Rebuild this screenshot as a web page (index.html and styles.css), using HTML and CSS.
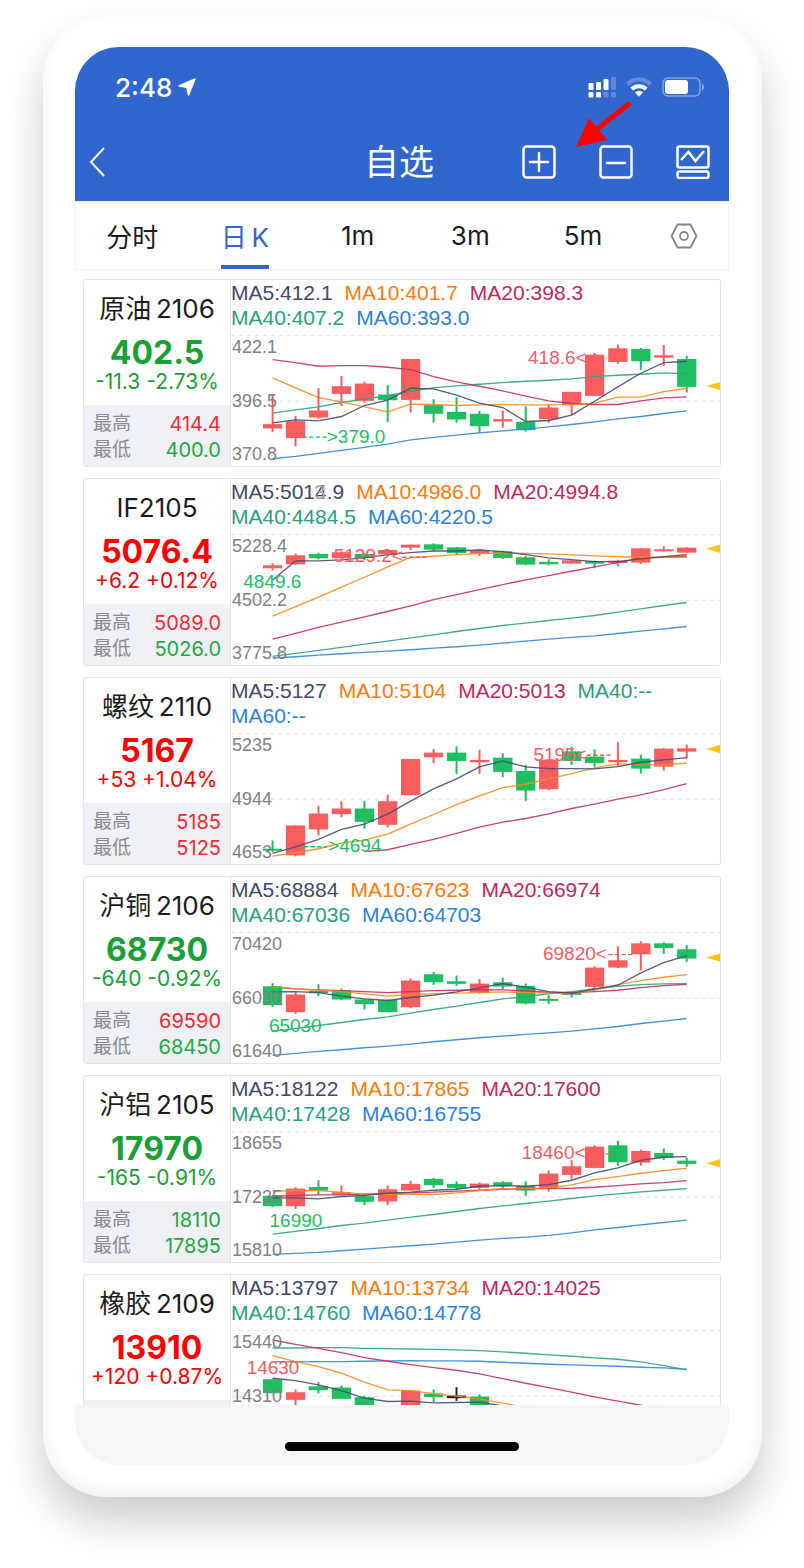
FILE: index.html
```
<!DOCTYPE html>
<html lang="zh-CN">
<head>
<meta charset="utf-8">
<meta name="viewport" content="width=device-width, initial-scale=1">
<title>自选</title>
<link rel="stylesheet" href="styles.css">
</head>
<body>
<main class="phone">
  <div class="screen">
    <header class="top">
      <div class="status">
        <span class="clock">2:48</span>
        <svg class="location" viewBox="0 0 18 18" aria-hidden="true"><path d="M17 1 10.500 17 9 9.300 1 8z"/></svg>
        <span class="indicators">
          <svg width="28" height="21" viewBox="0 0 28 21" fill="#fff" aria-hidden="true">
            <rect x=".5" y="6" width="5" height="7" rx="1"/><rect x="8" y="5" width="5" height="8" rx="1"/><rect x="15.500" y="2" width="5" height="11" rx="1"/><rect x="23" width="5" height="13" rx="1" opacity=".22"/>
            <rect x=".5" y="15" width="5" height="5.500" rx="1"/><rect x="8" y="15" width="5" height="5.500" rx="1"/><rect x="15.500" y="15" width="5" height="5.500" rx="1" opacity=".22"/><rect x="23" y="15" width="5" height="5.500" rx="1" opacity=".22"/>
          </svg>
          <svg width="26" height="20" viewBox="0 0 26 20" fill="none" stroke="#fff" stroke-width="4" aria-hidden="true">
            <path d="M1.500 7.500a16 16 0 0 1 23 0" opacity=".25"/><path d="M5.800 12a10.500 10.500 0 0 1 14.400 0"/><path d="M9 15.500a5.500 5.500 0 0 1 8 0L13 19.700z" fill="#fff" stroke="none"/>
          </svg>
          <svg width="43" height="20" viewBox="0 0 43 20" aria-hidden="true">
            <rect x="1" y="1" width="37" height="18" rx="5" fill="none" stroke="#fff" stroke-width="1.500" opacity=".4"/><rect x="3" y="3" width="23" height="14" rx="3" fill="#fff"/><path d="M40 6.500c2.600 1 2.600 6 0 7z" fill="#fff" opacity=".45"/>
          </svg>
        </span>
      </div>
      <div class="nav">
        <button class="icon-button back" aria-label="返回"><svg width="18" height="32" viewBox="0 0 18 32"><path d="M16 2 3 16l13 14" stroke-width="2"/></svg></button>
        <h1 class="title">自选</h1>
        <div class="actions">
          <button class="icon-button" aria-label="添加"><svg width="34" height="34" viewBox="0 0 34 34"><rect x="1.500" y="1.500" width="31" height="31" rx="3"/><path d="M17 8v18M8 17h18" stroke-linecap="round"/></svg></button>
          <button class="icon-button" aria-label="删除"><svg width="34" height="34" viewBox="0 0 34 34"><rect x="1.500" y="1.500" width="31" height="31" rx="3"/><path d="M8 18h18" stroke-linecap="round"/></svg></button>
          <button class="icon-button" aria-label="图表"><svg width="34" height="34" viewBox="0 0 34 34"><rect x="1.500" y="1.500" width="31" height="21" rx="2"/><rect x="1.500" y="26.500" width="31" height="6.500" rx="2"/><path d="m5 15 7.500-8 7 9 8.500-10"/></svg></button>
        </div>
        <svg class="pointer" width="56" height="46" viewBox="0 0 56 46" aria-hidden="true"><path d="M54 1 20 28" stroke="#f00" stroke-width="5"/><path d="M0 45 13 16 31 38z" fill="#f00"/></svg>
      </div>
    </header>

    <nav class="tabs">
      <button class="tab">分时</button>
      <button class="tab active">日&#8201;K</button>
      <button class="tab">1m</button>
      <button class="tab">3m</button>
      <button class="tab">5m</button>
      <button class="tab" aria-label="设置"><svg width="28" height="26" viewBox="0 0 28 26" fill="none" stroke="#85858a" stroke-width="1.800"><path d="M7.500 1.500h13L26.500 13l-6 11.500h-13L1.500 13z"/><circle cx="14" cy="13" r="4"/></svg></button>
    </nav>

    <section class="list">
      <article class="card">
        <div class="quote">
          <h2 class="name">原油&#8201;2106</h2>
          <div class="price down">402.5</div>
          <div class="change down">-11.3 -2.73%</div>
          <dl class="range"><dt>最高</dt><dd class="high">414.4</dd><dt>最低</dt><dd class="low">400.0</dd></dl>
        </div>
        <div class="panel">
          <div class="legend"><span class="ma5">MA5:412.1</span><span class="ma10">MA10:401.7</span><span class="ma20">MA20:398.3</span><span class="ma40">MA40:407.2</span><span class="ma60">MA60:393.0</span></div>
          <svg class="chart" role="img" aria-label="原油 2106 日K"></svg>
        </div>
      </article>

      <article class="card">
        <div class="quote">
          <h2 class="name">IF2105</h2>
          <div class="price up">5076.4</div>
          <div class="change up">+6.2 +0.12%</div>
          <dl class="range"><dt>最高</dt><dd class="high">5089.0</dd><dt>最低</dt><dd class="low">5026.0</dd></dl>
        </div>
        <div class="panel">
          <div class="legend"><span class="ma5">MA5:501<span class="stacked">4<span class="ghost">3</span></span>.9</span><span class="ma10">MA10:4986.0</span><span class="ma20">MA20:4994.8</span><span class="ma40">MA40:4484.5</span><span class="ma60">MA60:4220.5</span></div>
          <svg class="chart" role="img" aria-label="IF2105 日K"></svg>
        </div>
      </article>

      <article class="card">
        <div class="quote">
          <h2 class="name">螺纹&#8201;2110</h2>
          <div class="price up">5167</div>
          <div class="change up">+53 +1.04%</div>
          <dl class="range"><dt>最高</dt><dd class="high">5185</dd><dt>最低</dt><dd class="high">5125</dd></dl>
        </div>
        <div class="panel">
          <div class="legend"><span class="ma5">MA5:5127</span><span class="ma10">MA10:5104</span><span class="ma20">MA20:5013</span><span class="ma40">MA40:--</span><span class="ma60">MA60:--</span></div>
          <svg class="chart" role="img" aria-label="螺纹 2110 日K"></svg>
        </div>
      </article>

      <article class="card">
        <div class="quote">
          <h2 class="name">沪铜&#8201;2106</h2>
          <div class="price down">68730</div>
          <div class="change down">-640 -0.92%</div>
          <dl class="range"><dt>最高</dt><dd class="high">69590</dd><dt>最低</dt><dd class="low">68450</dd></dl>
        </div>
        <div class="panel">
          <div class="legend"><span class="ma5">MA5:68884</span><span class="ma10">MA10:67623</span><span class="ma20">MA20:66974</span><span class="ma40">MA40:67036</span><span class="ma60">MA60:64703</span></div>
          <svg class="chart" role="img" aria-label="沪铜 2106 日K"></svg>
        </div>
      </article>

      <article class="card">
        <div class="quote">
          <h2 class="name">沪铝&#8201;2105</h2>
          <div class="price down">17970</div>
          <div class="change down">-165 -0.91%</div>
          <dl class="range"><dt>最高</dt><dd class="low">18110</dd><dt>最低</dt><dd class="low">17895</dd></dl>
        </div>
        <div class="panel">
          <div class="legend"><span class="ma5">MA5:18122</span><span class="ma10">MA10:17865</span><span class="ma20">MA20:17600</span><span class="ma40">MA40:17428</span><span class="ma60">MA60:16755</span></div>
          <svg class="chart" role="img" aria-label="沪铝 2105 日K"></svg>
        </div>
      </article>

      <article class="card">
        <div class="quote">
          <h2 class="name">橡胶&#8201;2109</h2>
          <div class="price up">13910</div>
          <div class="change up">+120 +0.87%</div>
          <dl class="range"></dl>
        </div>
        <div class="panel">
          <div class="legend"><span class="ma5">MA5:13797</span><span class="ma10">MA10:13734</span><span class="ma20">MA20:14025</span><span class="ma40">MA40:14760</span><span class="ma60">MA60:14778</span></div>
          <svg class="chart" role="img" aria-label="橡胶 2109 日K"></svg>
        </div>
      </article>
    </section>

    <footer class="home"><span class="home-bar"></span></footer>
  </div>
</main>
<script src="charts.js"></script>
</body>
</html>
```
FILE: styles.css
```
* { box-sizing: border-box; }

body {
  margin: 0;
  height: 100vh;
  padding: 15px 42px 71px 43px;
  background: #fff;
  font-family: Inter, "Noto Sans CJK SC", sans-serif;
  color: #1c1c1e;
}

button {
  margin: 0;
  padding: 0;
  border: 0;
  background: none;
  font: inherit;
  color: inherit;
}

h1, h2, dl, dd { margin: 0; font-weight: 400; }
svg { display: block; }

.phone {
  height: 100%;
  padding: 32px 33px 32px 32px;
  border-radius: 64px;
  background: #fff;
  box-shadow: 0 24px 40px rgba(0, 0, 0, .2), inset 0 -6px 16px rgba(0, 0, 0, .06);
}

.screen {
  display: flex;
  flex-direction: column;
  height: 100%;
  border-radius: 44px;
  overflow: hidden;
  background: #fff;
}

.top { background: #3166cc; color: #fff; }

.status {
  display: flex;
  align-items: center;
  height: 80px;
  padding: 0 24px 0 40px;
}

.clock { font-size: 26px; font-weight: 500; }

.location {
  width: 18px;
  height: 18px;
  margin-left: 6px;
  fill: #fff;
  stroke: #fff;
  stroke-width: 1.5;
  stroke-linejoin: round;
}

.indicators {
  display: flex;
  align-items: center;
  gap: 10px;
  margin-left: auto;
}

.nav {
  position: relative;
  display: grid;
  grid-template-columns: 1fr auto 1fr;
  align-items: center;
  height: 74px;
  padding: 0 19px 4px 13px;
}

.title { font-size: 35px; line-height: 48px; }
.actions { display: flex; justify-content: flex-end; gap: 43px; }
.icon-button svg { fill: none; stroke: #fff; stroke-width: 2.5; }
.back { justify-self: start; }
.pointer { position: absolute; right: 97px; top: -25px; }

.tabs {
  display: grid;
  grid-template-columns: repeat(5, 113fr) 89fr;
  height: 69px;
  border: 1px solid #f4f4f6;
}

.tab {
  display: flex;
  align-items: center;
  justify-content: center;
  justify-self: center;
  border-top: 4px solid transparent;
  border-bottom: 4px solid transparent;
  font-size: 26px;
}

.tab.active { color: #3166cc; border-bottom-color: #3166cc; }

.list {
  display: flex;
  flex-direction: column;
  gap: 11px;
  flex: 1;
  min-height: 0;
  padding: 9px 8px 0;
  overflow: hidden;
}

.card {
  display: grid;
  grid-template-columns: 147px 1fr;
  flex: none;
  min-height: 188px;
  border: 1px solid #e2e4e8;
  border-radius: 3px;
}

.quote {
  display: flex;
  flex-direction: column;
  border-right: 1px solid #e2e4e8;
  text-align: center;
}

.name { padding-top: 10px; font-size: 26px; line-height: 38px; }
.price { font-size: 32px; font-weight: 700; line-height: 38px; margin-top: 6px; }
.change { font-size: 21px; line-height: 20px; }
.up { color: #fe0000; }
.down { color: #17a035; }

.range {
  display: grid;
  grid-template-columns: auto 1fr;
  align-content: start;
  flex: 1;
  margin-top: 13px;
  padding: 6px 9px 3px;
  background: #f0f1f7;
  font-size: 19px;
  line-height: 26px;
  color: #8a8a8f;
}

.range dd { text-align: right; font-size: 20px; }
.high { color: #f52a2f; }
.low { color: #24a63f; }

.panel { min-width: 0; }

.legend {
  display: flex;
  flex-wrap: wrap;
  column-gap: 12px;
  padding: 0 24px 5px 0;
  font-family: "Liberation Sans", Arial, sans-serif;
  font-size: 21px;
  line-height: 25px;
}

.ma5 { color: #40496b; }
.ma10 { color: #ff7a0a; }
.ma20 { color: #c2285a; }
.ma40 { color: #28a07f; }
.ma60 { color: #2a82dc; }

.stacked { position: relative; }
.ghost { position: absolute; left: -1px; top: 0; color: #a6a8ae; line-height: normal; }

.chart {
  width: 100%;
  font-family: "Liberation Sans", Arial, sans-serif;
}

.axis { font-size: 54px; fill: #808085; }
.note { font-size: 57px; }
.grid { stroke: #e2e2e6; stroke-width: 3; stroke-dasharray: 12 12; }
.dash { stroke-width: 4; stroke-dasharray: 13 7; }
.line { fill: none; stroke-width: 4; opacity: .9; }
.last { fill: #f8c610; }

.home {
  display: flex;
  justify-content: center;
  align-items: flex-end;
  height: 60px;
  padding-bottom: 14px;
  background: #f6f6f8;
}

.home-bar { width: 234px; height: 9px; border-radius: 5px; background: #000; }
```
FILE: charts.js
```
// Chart space is 1470 units wide; 19 candle slots, 69.2 units apart.
// Each candle: colour, high, body top, body bottom, low.
const RED = '#f95d5e', GREEN = '#1fbf61', BLACK = '#222';
const LINE = { ma60: '#2f86df', ma40: '#2da283', ma20: '#c4315f', ma10: '#ff8a1c', ma5: '#444e70' };
const COLORS = { r: RED, g: GREEN, k: BLACK };

const charts = [
  { top: 195, last: 346, axis: ['422.1', '396.5', '370.8'],
    candles: 'r 373 461 474 484,r 436 452 503 528,r 353 420 441 445,r 316 347 370 407,r 333 339 391 397,g 343 372 389 455,r 265 265 388 426,g 386 404 430 456,g 380 424 447 457,g 421 430 467 487,r 420 446 453 471,g 408 454 479 483,r 401 411 446 457,r 364 364 403 433,r 247 252 376 376,r 222 233 274 279,g 232 235 272 298,r 223 254 261 286,g 255 265 349 366',
    ma5: [457,448,451,438,405,389,353,355,374,398,411,453,450,434,392,349,308,276,272],
    ma10: [322,352,381,394,409,424,401,402,405,403,402,403,403,403,398,380,380,363,353],
    ma20: [267,276,287,285,285,290,297,318,334,347,361,377,391,399,402,402,391,382,379],
    ma40: [428,418,409,396,386,375,362,352,346,341,336,332,329,325,318,314,311,307,310],
    ma60: [565,558,549,540,531,521,508,501,494,487,481,476,469,462,454,445,438,429,421],
    notes: [[RED, '418.6<', 893, 279, 1068, 1130, 262], [GREEN, '>379.0', 288, 517, 215, 288, 500]] },
  { top: 192, last: 234, axis: ['5228.4', '4502.2', '3775.8'],
    candles: 'r 278 284 293 300,r 249 254 281 283,g 246 250 263 266,r 242 245 263 265,g 247 250 262 268,r 235 238 251 251,r 222 222 231 238,g 218 221 237 241,g 229 230 247 253,r 236 240 249 256,g 240 242 262 265,g 256 260 282 284,g 266 274 281 284,r 267 269 279 280,g 270 272 279 293,r 267 270 277 287,r 233 233 276 280,r 227 236 242 243,r 230 231 246 246',
    ma5: [328,271,271,268,262,252,246,241,241,238,243,252,262,267,273,273,265,258,252],
    ma10: [437,408,380,350,320,289,260,257,252,249,247,248,250,253,256,258,260,260,260],
    ma20: [506,489,471,455,439,423,406,387,372,357,342,328,315,302,289,276,262,260,257],
    ma40: [558,549,540,531,521,512,502,493,483,474,465,458,450,443,435,425,415,405,396],
    ma60: [563,559,554,550,546,542,538,533,529,524,518,512,506,501,496,489,482,475,468],
    notes: [[RED, '5129.2<', 309, 275, 515, 590, 260], [GREEN, '4849.6', 37, 351]] },
  { top: 190, last: 236, axis: ['5235', '4944', '4653'],
    candles: 'g 511 536 542 546,r 466 466 556 559,r 407 430 478 495,r 393 415 432 441,g 392 415 455 476,r 373 393 464 472,r 266 266 375 375,r 236 247 261 279,g 228 247 272 311,r 238 269 276 311,g 249 262 305 321,g 284 302 361 392,r 268 268 357 360,g 230 243 272 284,g 237 259 278 290,r 216 269 276 288,g 253 265 295 310,r 233 235 289 301,r 223 234 244 265',
    ma5: [550,530,508,478,462,432,393,356,326,290,272,290,295,295,296,289,276,269,262],
    ma10: [558,548,536,519,510,492,462,433,403,377,352,342,326,310,293,281,284,283,279],
    ma20: [null,null,null,null,544,539,523,508,490,471,456,445,431,415,402,387,374,358,340],
    notes: [[RED, '5195<', 909, 273, 1069, 1141, 255], [GREEN, '>4694', 292, 546, 219, 289, 530]] },
  { top: 187, last: 262, axis: ['70420', '66030', '61640'],
    candles: 'g 339 348 405 410,r 366 373 426 431,g 342 362 369 378,g 355 360 388 390,g 387 388 402 418,g 388 389 426 426,r 325 331 411 414,g 305 312 336 344,g 316 333 341 347,r 326 340 367 370,g 322 336 349 357,g 340 347 400 402,g 375 386 392 402,g 367 368 374 382,r 288 292 350 353,r 228 270 292 293,r 213 219 252 301,g 216 219 233 251,g 224 237 265 275',
    ma5: [365,364,367,378,386,391,382,375,365,353,340,351,364,369,357,345,308,277,256],
    ma10: [350,356,360,364,371,378,373,371,369,367,365,367,369,371,360,343,331,321,313],
    ma20: [350,356,359,361,364,367,364,361,360,358,359,362,366,367,364,360,352,346,342],
    ma40: [484,475,466,457,448,440,429,418,408,397,386,379,371,364,355,348,343,341,340],
    ma60: [556,550,544,539,533,528,522,515,509,503,498,493,488,483,476,469,460,453,445],
    notes: [[RED, '69820<', 938, 270, 1134, 1207, 253], [GREEN, '65030', 114, 487]] },
  { top: 184, last: 279, axis: ['18655', '17235', '15810'],
    candles: 'g 375 377 408 411,r 351 355 408 416,g 330 350 361 374,r 346 366 373 373,g 372 378 395 405,r 346 357 394 405,r 332 341 361 361,g 323 326 345 353,g 333 341 353 360,r 337 340 353 358,g 332 336 348 354,g 333 347 361 378,r 301 310 353 364,r 270 288 314 327,r 225 229 293 294,g 211 225 276 287,r 238 242 277 286,g 235 248 262 269,g 262 271 281 290',
    ma5: [383,383,386,379,376,369,366,360,357,348,346,348,343,330,308,293,270,261,259],
    ma10: [363,361,361,366,372,373,372,373,368,361,355,355,352,344,328,319,309,301,294],
    ma20: [378,376,374,374,372,370,368,366,363,360,357,356,355,354,351,346,341,337,331],
    ma40: [492,484,475,466,459,450,441,433,424,415,407,400,393,385,377,371,365,360,355],
    ma60: [553,550,547,542,537,532,527,522,516,510,505,501,496,488,479,472,464,457,450],
    notes: [[RED, '18460<', 874, 266, 1067, 1140, 251], [GREEN, '16990', 116, 472]] },
  { top: 181, axis: ['15440', '14310'],
    candles: 'g 326 327 369 370,r 358 366 389 406,g 336 348 360 370,g 346 352 386 386,g 376 381 415 420,g 420 430 450 460,r 361 361 430 430,g 358 370 381 396,k 351 376 384 392,g 373 379 430 430',
    ma5: [324,331,344,361,384,394,393,398,397,396,407,420],
    ma10: [256,274,289,309,336,359,361,370,378,387,399,412],
    ma20: [209,222,234,247,262,273,283,292,300,311,325,339,352,366,380,393,405,418],
    ma40: [233,233,232,232,234,235,236,237,239,241,245,249,254,258,263,267,275,286,299],
    ma60: [274,275,274,274,273,272,271,272,272,273,276,279,282,284,286,288,291,293,297],
    notes: [[RED, '14630', 47, 310]] }
];

const slot = i => Math.round(124.5 + 69.2 * i);
const escape = s => s.replace('<', '&lt;').replace('>', '&gt;');

document.querySelectorAll('.chart').forEach((svg, n) => {
  const c = charts[n];
  svg.setAttribute('viewBox', `0 ${c.top - 2} 1470 390`);
  let out = [0, 197].map(d => `<path class="grid" d="M0 ${c.top + d}H1470"/>`).join('');
  c.candles.split(',').forEach((item, i) => {
    const [k, high, a, b, low] = item.split(' ');
    const x = slot(i);
    out += `<path fill="${COLORS[k]}" d="M${x - 29} ${a}h58V${b}h-58z"/><path fill="${COLORS[k]}" d="M${x - 3} ${high}h6V${low}h-6z"/>`;
  });
  for (const key in LINE) {
    if (!c[key]) continue;
    const pts = c[key].map((y, i) => y === null ? '' : `${slot(i)},${y}`).join(' ').trim();
    out += `<polyline class="line" stroke="${LINE[key]}" points="${pts}"/>`;
  }
  c.notes.forEach(([color, text, x, y, x1, x2, ly]) => {
    out += `<text class="note" fill="${color}" x="${x}" y="${y}">${escape(text)}</text>`;
    if (x1) out += `<path class="dash" stroke="${color}" d="M${x1} ${ly}H${x2}"/>`;
  });
  c.axis.forEach((t, i) => {
    out += `<text class="axis" x="3" y="${c.top + 51 + i * 162}">${t}</text>`;
  });
  if (c.last) out += `<path class="last" d="M1428 ${c.last}l42-12v24z"/>`;
  svg.innerHTML = out;
});
```
